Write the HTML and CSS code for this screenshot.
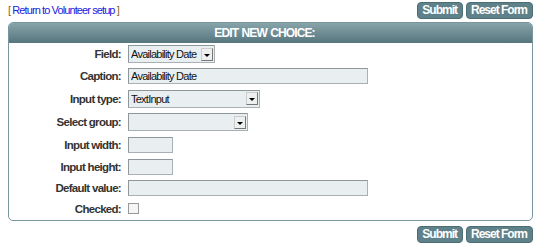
FILE: index.html
```html
<!DOCTYPE html>
<html lang="en">
<head>
    <meta charset="UTF-8">
    <title>Edit new choice</title>
    <link rel="stylesheet" href="styles.css">
</head>
<body>
    <div class="page">
        <div class="bar">
            <span class="back"><b>[</b> <a href="javascript:;">Return to Volunteer setup</a> <b>]</b></span>
            <span class="btns">
                <button type="button" class="btn">Submit</button>
                <button type="button" class="btn">Reset Form</button>
            </span>
        </div>

        <div class="panel">
            <div class="panel_head">EDIT NEW CHOICE:</div>
            <div class="panel_body">
                <div class="row">
                    <label>Field:</label>
                    <span class="sel sel_field">
                        <select><option>Availability Date</option></select>
                        <span class="arrow"></span>
                    </span>
                </div>
                <div class="row">
                    <label>Caption:</label>
                    <input type="text" class="txt txt_long" value="Availability Date">
                </div>
                <div class="row tall">
                    <label>Input type:</label>
                    <span class="sel sel_type">
                        <select><option>TextInput</option></select>
                        <span class="arrow"></span>
                    </span>
                </div>
                <div class="row tall">
                    <label>Select group:</label>
                    <span class="sel sel_group">
                        <select><option></option></select>
                        <span class="arrow"></span>
                    </span>
                </div>
                <div class="row">
                    <label>Input width:</label>
                    <input type="text" class="txt txt_short">
                </div>
                <div class="row short">
                    <label>Input height:</label>
                    <input type="text" class="txt txt_short">
                </div>
                <div class="row short">
                    <label>Default value:</label>
                    <input type="text" class="txt txt_long">
                </div>
                <div class="row short">
                    <label>Checked:</label>
                    <span class="chk"></span>
                </div>
            </div>
        </div>

        <div class="bar bar_bottom">
            <span class="btns">
                <button type="button" class="btn">Submit</button>
                <button type="button" class="btn">Reset Form</button>
            </span>
        </div>
    </div>
</body>
</html>
```

FILE: styles.css
```css
*{
    margin: 0;
    padding: 0;
    box-sizing: border-box;
}
body{
    font-family: "Liberation Sans", Arial, sans-serif;
    background-color: #fff;
    color: #333;
}
.page{
    width: 540px;
    padding: 0 7px 0 8px;
}
.bar{
    height: 22px;
    display: flex;
    justify-content: space-between;
    align-items: flex-start;
}
.bar_bottom{
    justify-content: flex-end;
    padding-top: 3px;
}
.back{
    font-size: 11px;
    letter-spacing: -0.9px;
    padding-top: 4px;
    color: #7a6a30;
}
.back b{
    font-weight: normal;
}
.back a{
    color: #2020e0;
    text-decoration: none;
}
.btns{
    display: flex;
    gap: 3px;
    padding-top: 2px;
}
.btn{
    font-family: inherit;
    font-size: 12px;
    font-weight: bold;
    letter-spacing: -1px;
    color: #fff;
    height: 17px;
    padding: 0 5px 0 4px;
    background-color: #5f8189;
    border: 1px solid #4d6d75;
    border-radius: 4px;
    line-height: 15px;
}
/* panel */
.panel{
    border: 1px solid #7a969d;
    border-radius: 5px;
    overflow: hidden;
}
.panel_head{
    height: 20px;
    line-height: 20px;
    text-align: center;
    color: #fff;
    font-size: 12px;
    font-weight: bold;
    letter-spacing: -0.9px;
    word-spacing: 1px;
    padding-right: 12px;
    background: linear-gradient(#88a4ab, #56757d);
}
.panel_body{
    padding-bottom: 1px;
}
.row{
    height: 22px;
    display: flex;
    align-items: center;
}
.row.tall{
    height: 23.5px;
}
.row.short{
    height: 21px;
}
.row label{
    width: 119px;
    padding-right: 7px;
    text-align: right;
    font-size: 11.5px;
    font-weight: bold;
    letter-spacing: -0.7px;
    color: #333;
}
.txt{
    height: 16px;
    border: 1px solid #a9b1b4;
    border-top-color: #8d9699;
    border-left-color: #8d9699;
    background-color: #e9eff1;
    font-family: inherit;
    font-size: 11px;
    letter-spacing: -0.75px;
    color: #111;
    padding: 0 2px;
}
.txt_long{
    width: 240px;
}
.txt_short{
    width: 45px;
}
.sel{
    display: inline-flex;
    align-items: center;
    height: 18px;
    border: 1px solid #a9b1b4;
    border-top-color: #8d9699;
    border-left-color: #8d9699;
    background-color: #e9eff1;
    padding-right: 1px;
}
.sel select{
    appearance: none;
    -webkit-appearance: none;
    border: none;
    background: transparent;
    font-family: inherit;
    font-size: 11px;
    letter-spacing: -0.75px;
    color: #111;
    flex: 1;
    width: 0;
    min-width: 0;
    padding-left: 2px;
    outline: none;
}
.sel_field{
    width: 87px;
}
.sel_type{
    width: 132px;
}
.sel_group{
    width: 120px;
}
.arrow{
    width: 12px;
    height: 13px;
    background-color: #eef0f0;
    border: 1px solid #777;
    border-top-color: #ccc;
    border-left-color: #ccc;
    display: flex;
    align-items: center;
    justify-content: center;
    padding-top: 2px;
}
.arrow::after{
    content: "";
    border-left: 3px solid transparent;
    border-right: 3px solid transparent;
    border-top: 3px solid #000;
}
.chk{
    width: 11px;
    height: 11px;
    border: 1px solid #999;
    background-color: #f3f5f6;
}
```
